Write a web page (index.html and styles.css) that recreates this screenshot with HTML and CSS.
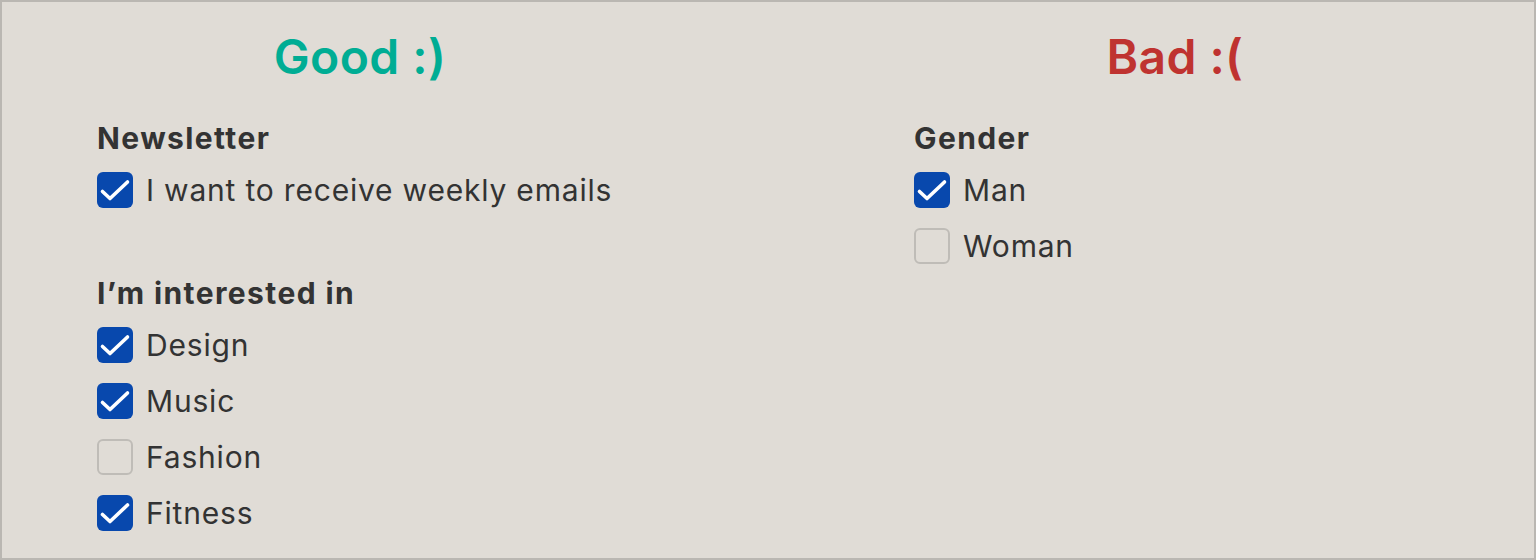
FILE: index.html
```html
<!DOCTYPE html>
<html lang="en">
<head>
  <meta charset="UTF-8" />
  <title>Checkboxes: good vs bad</title>
  <link rel="stylesheet" href="styles.css">
</head>
<body>
  <div class="board">
    <div class="column">
      <h1 class="title good">Good :)</h1>

      <div class="group">
        <div class="group-label">Newsletter</div>
        <label class="option"><span class="box checked"><svg viewBox="0 0 36 36"><path d="M5.5 19.5 L13 26.5 L30.5 10" /></svg></span>I want to receive weekly emails</label>
      </div>

      <div class="group">
        <div class="group-label">I’m interested in</div>
        <label class="option"><span class="box checked"><svg viewBox="0 0 36 36"><path d="M5.5 19.5 L13 26.5 L30.5 10" /></svg></span>Design</label>
        <label class="option"><span class="box checked"><svg viewBox="0 0 36 36"><path d="M5.5 19.5 L13 26.5 L30.5 10" /></svg></span>Music</label>
        <label class="option"><span class="box"></span>Fashion</label>
        <label class="option"><span class="box checked"><svg viewBox="0 0 36 36"><path d="M5.5 19.5 L13 26.5 L30.5 10" /></svg></span>Fitness</label>
      </div>
    </div>

    <div class="column">
      <h1 class="title bad">Bad :(</h1>

      <div class="group">
        <div class="group-label">Gender</div>
        <label class="option"><span class="box checked"><svg viewBox="0 0 36 36"><path d="M5.5 19.5 L13 26.5 L30.5 10" /></svg></span>Man</label>
        <label class="option"><span class="box"></span>Woman</label>
      </div>
    </div>
  </div>
</body>
</html>
```

FILE: styles.css
```css
* { margin: 0; padding: 0; box-sizing: border-box; }

body {
  font-family: Inter, "Liberation Sans", sans-serif;
  color: #333;
  background: #e0dcd6;
}

.board {
  height: 560px;
  border: 2px solid #bab7b2;
  background: #e0dcd6;
  padding: 26px 95px 0;
  display: grid;
  grid-template-columns: 526px 522px;
  column-gap: 291px;
  align-content: start;
}

.title {
  font-size: 48px;
  font-weight: 600;
  line-height: 58px;
  letter-spacing: 0.4px;
  text-align: center;
  margin-bottom: 35px;
}

.title.good { color: #00ad94; }
.title.bad { color: #bf3330; }

.group {
  display: flex;
  flex-direction: column;
  gap: 20px;
}

.group + .group {
  margin-top: 68px;
}

.group-label {
  font-size: 30px;
  font-weight: 700;
  line-height: 34px;
  letter-spacing: 1.4px;
  margin-bottom: -3px;
}

.option {
  display: flex;
  align-items: center;
  gap: 13px;
  height: 36px;
  font-size: 30px;
  line-height: 36px;
  letter-spacing: 0.8px;
}

.box {
  width: 36px;
  height: 36px;
  flex: none;
  border-radius: 6px;
  border: 2px solid #bfbcb7;
}

.box.checked {
  border: none;
  background: #0848ad;
}

.box svg {
  display: block;
  width: 36px;
  height: 36px;
  fill: none;
  stroke: #fff;
  stroke-width: 3.6;
  stroke-linecap: round;
  stroke-linejoin: round;
}
```
